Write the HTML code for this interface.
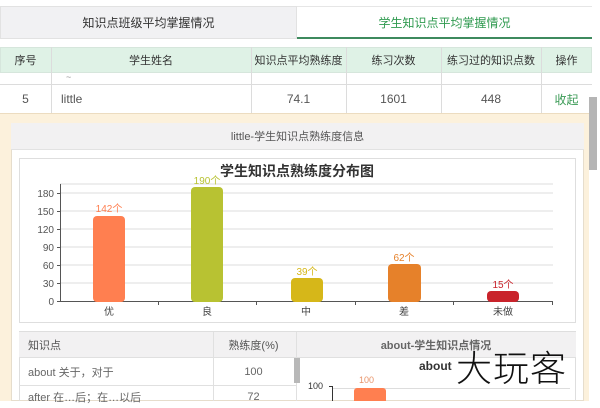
<!DOCTYPE html>
<html><head><meta charset="utf-8">
<style>
*{margin:0;padding:0;box-sizing:border-box}
body{width:600px;height:408px;overflow:hidden;background:#fff;font-family:"Liberation Sans","Noto Sans CJK SC",sans-serif;color:#555;position:relative}
.a{position:absolute;white-space:nowrap}
.c{display:flex;align-items:center;justify-content:center}
.l{display:flex;align-items:center}
.h{font-size:11px;color:#333}
</style></head><body>
<div class="a c" style="left:0;top:6px;width:297px;height:33px;background:#f1f1f3;border:1px solid #e2e2e2;font-size:12px;color:#333">知识点班级平均掌握情况</div>
<div class="a c" style="left:297px;top:6px;width:295px;height:33px;background:#fff;border-top:1px solid #e6e6e6;border-bottom:2px solid #3e8a5e;font-size:12px;color:#2f9a4f">学生知识点平均掌握情况</div>
<div class="a" style="left:0;top:47px;width:592px;height:26px;background:#dff2e6;border:1px solid #d6e6dc"></div>
<div class="a c h" style="left:0;top:47px;width:51px;height:26px">序号</div>
<div class="a c h" style="left:51px;top:47px;width:200px;height:26px">学生姓名</div>
<div class="a c h" style="left:251px;top:47px;width:95px;height:26px">知识点平均熟练度</div>
<div class="a c h" style="left:346px;top:47px;width:95px;height:26px">练习次数</div>
<div class="a c h" style="left:441px;top:47px;width:100px;height:26px">练习过的知识点数</div>
<div class="a c h" style="left:541px;top:47px;width:51px;height:26px">操作</div>
<div class="a" style="left:51px;top:47px;width:1px;height:66px;background:#dcdcdc"></div>
<div class="a" style="left:251px;top:47px;width:1px;height:66px;background:#dcdcdc"></div>
<div class="a" style="left:346px;top:47px;width:1px;height:66px;background:#dcdcdc"></div>
<div class="a" style="left:441px;top:47px;width:1px;height:66px;background:#dcdcdc"></div>
<div class="a" style="left:541px;top:47px;width:1px;height:66px;background:#dcdcdc"></div>
<div class="a" style="left:0;top:84px;width:592px;height:1px;background:#dcdcdc"></div>
<div class="a" style="left:66px;top:72px;font-size:9px;color:#999">~</div>
<div class="a c" style="left:0;top:85px;width:51px;height:28px;font-size:12px">5</div>
<div class="a l" style="left:61px;top:85px;height:28px;font-size:12px">little</div>
<div class="a c" style="left:251px;top:85px;width:95px;height:28px;font-size:12px">74.1</div>
<div class="a c" style="left:346px;top:85px;width:95px;height:28px;font-size:12px">1601</div>
<div class="a c" style="left:441px;top:85px;width:100px;height:28px;font-size:12px">448</div>
<div class="a c" style="left:541px;top:85px;width:51px;height:28px;font-size:12px;color:#3a9a55">收起</div>
<div class="a" style="left:589px;top:97px;width:8px;height:73px;background:#b5b5b5"></div>
<div class="a" style="left:0;top:113px;width:589px;height:288px;background:#fcf1dc;border-top:1px solid #ecdcc0"></div>
<div class="a" style="left:11px;top:123px;width:573px;height:278px;background:#fff;border:1px solid #e6ddcc"></div>
<div class="a c" style="left:11px;top:123px;width:573px;height:27px;background:#f2f1f2;border-bottom:1px solid #e2e2e2;font-size:11px;color:#555">little-学生知识点熟练度信息</div>
<div class="a" style="left:19px;top:158px;width:557px;height:165px;border:1px solid #dedede"></div>
<svg class="a" style="left:0;top:0" width="600" height="408">
<g font-family="Liberation Sans, Noto Sans CJK SC, sans-serif">
<text x="297" y="176" font-size="14" font-weight="bold" fill="#333" text-anchor="middle">学生知识点熟练度分布图</text>
<g stroke="#ddd" stroke-width="1">
<line x1="60" y1="184" x2="553" y2="184"/><line x1="60" y1="193" x2="553" y2="193"/><line x1="60" y1="211" x2="553" y2="211"/><line x1="60" y1="229" x2="553" y2="229"/><line x1="60" y1="247" x2="553" y2="247"/><line x1="60" y1="265" x2="553" y2="265"/><line x1="60" y1="283" x2="553" y2="283"/>
</g>
<g stroke="#555" stroke-width="1">
<line x1="60.5" y1="184" x2="60.5" y2="302"/><line x1="60" y1="301.5" x2="553" y2="301.5"/>
<line x1="57" y1="193.5" x2="60" y2="193.5"/><line x1="57" y1="211.5" x2="60" y2="211.5"/><line x1="57" y1="229.5" x2="60" y2="229.5"/><line x1="57" y1="247.5" x2="60" y2="247.5"/><line x1="57" y1="265.5" x2="60" y2="265.5"/><line x1="57" y1="283.5" x2="60" y2="283.5"/><line x1="57" y1="301.5" x2="60" y2="301.5"/>
<line x1="158.5" y1="301" x2="158.5" y2="305"/><line x1="256.5" y1="301" x2="256.5" y2="305"/><line x1="355.5" y1="301" x2="355.5" y2="305"/><line x1="453.5" y1="301" x2="453.5" y2="305"/><line x1="552.5" y1="301" x2="552.5" y2="305"/>
</g>
<g font-size="10" fill="#555" text-anchor="end">
<text x="54" y="197">180</text><text x="54" y="215">150</text><text x="54" y="233">120</text><text x="54" y="251">90</text><text x="54" y="269">60</text><text x="54" y="287">30</text><text x="54" y="305">0</text>
</g>
<rect x="93" y="216" width="32" height="86" rx="4" fill="#ff7f50"/>
<rect x="191" y="187" width="32" height="115" rx="4" fill="#b8c232"/>
<rect x="291" y="278" width="32" height="24" rx="4" fill="#d6b719"/>
<rect x="388" y="264" width="33" height="38" rx="4" fill="#e6812a"/>
<rect x="487" y="291" width="32" height="11" rx="4" fill="#c9232b"/>
<g font-size="10" text-anchor="middle">
<text x="109" y="212" fill="#ff7f50">142个</text>
<text x="207" y="184" fill="#b8c232">190个</text>
<text x="307" y="275" fill="#d6b719">39个</text>
<text x="404" y="261" fill="#e6812a">62个</text>
<text x="503" y="288" fill="#c9232b">15个</text>
</g>
<g font-size="10" fill="#444" text-anchor="middle">
<text x="109" y="315">优</text><text x="207" y="315">良</text><text x="306" y="315">中</text><text x="404" y="315">差</text><text x="503" y="315">未做</text>
</g>
</g>
</svg>
<div class="a" style="left:19px;top:331px;width:557px;height:70px;border:1px solid #dedede;border-bottom:none"></div>
<div class="a" style="left:19px;top:332px;width:557px;height:26px;background:#f2f1f2;border-bottom:1px solid #e0e0e0"></div>
<div class="a" style="left:213px;top:332px;width:1px;height:69px;background:#e0e0e0"></div>
<div class="a" style="left:296px;top:332px;width:1px;height:69px;background:#e0e0e0"></div>
<div class="a l" style="left:28px;top:332px;height:26px;font-size:11px">知识点</div>
<div class="a c" style="left:213px;top:332px;width:81px;height:26px;font-size:11px">熟练度(%)</div>
<div class="a c" style="left:296px;top:332px;width:280px;height:26px;font-size:11px;font-weight:bold;color:#666">about-学生知识点情况</div>
<div class="a" style="left:19px;top:385px;width:277px;height:1px;background:#e0e0e0"></div>
<div class="a l" style="left:28px;top:358px;height:27px;font-size:11px;color:#666">about 关于，对于</div>
<div class="a c" style="left:213px;top:358px;width:81px;height:27px;font-size:11px;color:#666">100</div>
<div class="a l" style="left:28px;top:386px;height:22px;font-size:11px;color:#666">after 在…后；在…以后</div>
<div class="a c" style="left:213px;top:386px;width:81px;height:22px;font-size:11px;color:#666">72</div>
<div class="a" style="left:294px;top:358px;width:6px;height:25px;background:#b8b8b8"></div>
<div class="a" style="left:419px;top:359px;font-size:12px;font-weight:bold;color:#333">about</div>
<div class="a" style="left:359px;top:375px;font-size:9px;color:#e8946a">100</div>
<div class="a" style="left:308px;top:381px;font-size:9px;color:#333">100</div>
<div class="a" style="left:332px;top:386px;width:1px;height:15px;background:#333"></div>
<div class="a" style="left:329px;top:386px;width:4px;height:1px;background:#333"></div>
<div class="a" style="left:333px;top:388px;width:237px;height:1px;background:#ddd"></div>
<div class="a" style="left:354px;top:388px;width:32px;height:13px;background:#ff7f50;border-radius:3px 3px 0 0"></div>
<div class="a" style="left:456px;top:344px;font-size:36px;color:#111;font-family:'Noto Sans CJK SC',sans-serif;font-weight:300;letter-spacing:1px;line-height:44px">大玩客</div>
</body></html>
